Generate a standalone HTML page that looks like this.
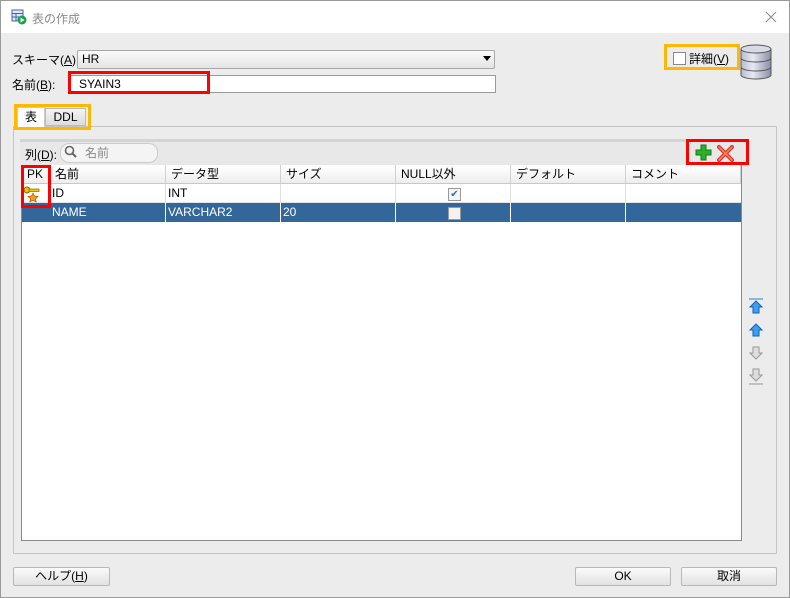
<!DOCTYPE html>
<html><head><meta charset="utf-8"><style>
*{box-sizing:border-box;margin:0;padding:0}
body{width:790px;height:598px;position:relative;background:#ececec;font-family:"Liberation Sans","Noto Sans CJK JP",sans-serif;font-size:12px;color:#000;overflow:hidden}
.a{position:absolute}
.win{left:0;top:0;width:790px;height:598px;border:1px solid #9a9a9a}
.title{left:1px;top:1px;width:788px;height:32px;background:#fff}
.btn{border:1px solid #b8b8b8;border-radius:2px;background:linear-gradient(#fafafa,#e2e2e2);text-align:center;line-height:17px}
.hd{top:165px;height:19px;border-right:1px solid #d0d0d0;border-bottom:1px solid #c8c8c8;background:linear-gradient(#fff,#eee);padding-left:5px;line-height:18px}
.c{height:19px;line-height:19px;padding-left:2px;border-right:1px solid #e0e0e0}
.sel{color:#fff;border-right:1px solid #fff}
</style></head><body>
<div class="a win"></div>
<div class="a title"></div>
<svg class="a" style="left:11px;top:9px" width="16" height="16"><rect x="1" y="1" width="11" height="11" fill="#dfe8f5" stroke="#3d65a8"/><line x1="1" y1="4.5" x2="12" y2="4.5" stroke="#3d65a8"/><line x1="1" y1="8" x2="12" y2="8" stroke="#3d65a8"/><line x1="5" y1="4.5" x2="5" y2="12" stroke="#3d65a8"/><circle cx="11" cy="11" r="4.5" fill="#1aa14a"/><path d="M9.5 8.5L13.5 11L9.5 13.5Z" fill="#fff"/></svg>
<div class="a" style="left:32px;top:10px;color:#8a8a8a;font-size:12px">表の作成</div>
<svg class="a" style="left:765px;top:11px" width="12" height="12"><path d="M1 1L11 11M11 1L1 11" stroke="#888" stroke-width="1"/></svg>

<div class="a" style="left:12px;top:51px">スキーマ(<u>A</u>):</div>
<div class="a" style="left:77px;top:50px;width:418px;height:19px;border:1px solid #a8a8a8;border-radius:2px;background:linear-gradient(#fafafa,#e4e4e4);padding-left:4px;line-height:17px">HR</div>
<div class="a" style="left:483px;top:56px;width:0;height:0;border-left:4px solid transparent;border-right:4px solid transparent;border-top:5px solid #000"></div>
<div class="a" style="left:12px;top:76px">名前(<u>B</u>):</div>
<div class="a" style="left:70px;top:75px;width:426px;height:18px;border:1px solid #999;background:#fff;padding-left:8px;line-height:16px">SYAIN3</div>
<div class="a" style="left:68px;top:71px;width:142px;height:23px;border:3px solid #f00"></div>

<div class="a" style="left:664px;top:44px;width:76px;height:26px;border:3px solid #ffb800"></div>
<div class="a" style="left:673px;top:52px;width:13px;height:13px;border:1px solid #888;background:#fff"></div>
<div class="a" style="left:689px;top:50px">詳細(<u>V</u>)</div>
<svg class="a" style="left:739px;top:43px" width="36" height="38"><defs><linearGradient id="g" x1="0" x2="1"><stop offset="0" stop-color="#b9bcd0"/><stop offset=".4" stop-color="#e6e8f2"/><stop offset="1" stop-color="#8c8fa8"/></linearGradient></defs><path d="M2 6V32A15 4 0 0 0 32 32V6Z" fill="url(#g)" stroke="#555"/><ellipse cx="17" cy="6" rx="15" ry="4" fill="#d8dae8" stroke="#555"/><path d="M2 15A15 4 0 0 0 32 15M2 24A15 4 0 0 0 32 24" fill="none" stroke="#555"/></svg>

<div class="a" style="left:13px;top:126px;width:764px;height:428px;border:1px solid #c4c4c4"></div>
<div class="a" style="left:17px;top:107px;width:28px;height:20px;background:#fff;border:1px solid #ccc;border-bottom:none;text-align:center;line-height:19px">表</div>
<div class="a" style="left:45px;top:108px;width:41px;height:18px;background:linear-gradient(#f4f4f4,#dcdcdc);border:1px solid #bbb;text-align:center;line-height:17px">DDL</div>
<div class="a" style="left:14px;top:104px;width:77px;height:26px;border:3px solid #ffb800"></div>

<div class="a" style="left:20px;top:139px;width:729px;height:27px;background:#e8e8e8;border-top:3px solid #d4d4d4"></div>
<div class="a" style="left:25px;top:146px">列(<u>D</u>):</div>
<div class="a" style="left:60px;top:143px;width:98px;height:20px;border:1px solid #ccc;border-radius:9px;background:#f4f4f4;padding-left:24px;line-height:18px;color:#888">名前</div>
<svg class="a" style="left:64px;top:145px" width="14" height="14"><circle cx="5.5" cy="5.5" r="4" fill="none" stroke="#666" stroke-width="1.6"/><line x1="8.5" y1="8.5" x2="12" y2="12" stroke="#666" stroke-width="2"/></svg>
<svg class="a" style="left:695px;top:144px" width="18" height="18"><path d="M6 1H11V6H16V11H11V16H6V11H1V6H6Z" fill="#29b12a" stroke="#167a17"/></svg>
<svg class="a" style="left:717px;top:144px" width="18" height="18"><path d="M2 3L15 16M15 3L2 16" stroke="#d33" stroke-width="4" stroke-linecap="round"/><path d="M2 3L15 16M15 3L2 16" stroke="#ff8a5a" stroke-width="1.5" stroke-linecap="round"/></svg>
<div class="a" style="left:686px;top:139px;width:63px;height:26px;border:3px solid #f00"></div>

<div class="a" style="left:21px;top:165px;width:721px;height:376px;background:#fff;border:1px solid #8a8a8a;border-top:none"></div>
<div class="a hd" style="left:21px;width:29px;padding-left:6px">PK</div>
<div class="a hd" style="left:50px;width:116px">名前</div>
<div class="a hd" style="left:166px;width:115px">データ型</div>
<div class="a hd" style="left:281px;width:115px">サイズ</div>
<div class="a hd" style="left:396px;width:115px">NULL以外</div>
<div class="a hd" style="left:511px;width:115px">デフォルト</div>
<div class="a hd" style="left:626px;width:115px">コメント</div>

<div class="a" style="left:22px;top:184px;width:719px;height:19px;border-bottom:1px solid #e4e4e4"></div>
<div class="a c" style="left:50px;top:184px;width:116px">ID</div>
<div class="a c" style="left:166px;top:184px;width:115px">INT</div>
<div class="a c" style="left:281px;top:184px;width:115px"></div>
<div class="a c" style="left:396px;top:184px;width:115px"></div>
<div class="a c" style="left:511px;top:184px;width:115px"></div>
<div class="a" style="left:448px;top:188px;width:13px;height:13px;border:1px solid #999;background:#f6f6f6;color:#2a6fd6;font-size:10px;line-height:11px;text-align:center">✔</div>
<svg class="a" style="left:23px;top:186px" width="18" height="17"><circle cx="4" cy="4" r="3" fill="#f5c400" stroke="#8a6a00"/><rect x="6" y="3" width="10" height="2.5" fill="#f5c400" stroke="#8a6a00" stroke-width=".7"/><path d="M10 7L11.5 10L15 10.4L12.5 12.8L13.2 16L10 14.3L6.8 16L7.5 12.8L5 10.4L8.5 10Z" fill="#f0a020" stroke="#b05a00" stroke-width=".7"/></svg>
<div class="a" style="left:22px;top:203px;width:719px;height:19px;background:#336699"></div>
<div class="a c sel" style="left:50px;top:203px;width:116px">NAME</div>
<div class="a c sel" style="left:166px;top:203px;width:115px">VARCHAR2</div>
<div class="a c sel" style="left:281px;top:203px;width:115px">20</div>
<div class="a c sel" style="left:396px;top:203px;width:115px"></div>
<div class="a c sel" style="left:511px;top:203px;width:115px"></div>
<div class="a" style="left:448px;top:207px;width:13px;height:13px;border:1px solid #999;background:#f2f2f2"></div>
<div class="a" style="left:21px;top:165px;width:30px;height:43px;border:3px solid #f00"></div>

<svg class="a" style="left:747px;top:297px" width="18" height="90">
<line x1="2" y1="2" x2="16" y2="2" stroke="#2a7fd0"/>
<path d="M9 4L15 10H12V16H6V10H3Z" fill="#3aa0f0" stroke="#1a5fb0"/>
<path d="M9 27L15 33H12V39H6V33H3Z" fill="#3aa0f0" stroke="#1a5fb0"/>
<path d="M6 50H12V56H15L9 62L3 56H6Z" fill="#ddd" stroke="#999"/>
<path d="M6 72H12V78H15L9 84L3 78H6Z" fill="#ddd" stroke="#999"/>
<line x1="2" y1="87" x2="16" y2="87" stroke="#999"/>
</svg>

<div class="a btn" style="left:13px;top:567px;width:97px;height:19px">ヘルプ(<u>H</u>)</div>
<div class="a btn" style="left:575px;top:567px;width:96px;height:19px">OK</div>
<div class="a btn" style="left:681px;top:567px;width:96px;height:19px">取消</div>
</body></html>
